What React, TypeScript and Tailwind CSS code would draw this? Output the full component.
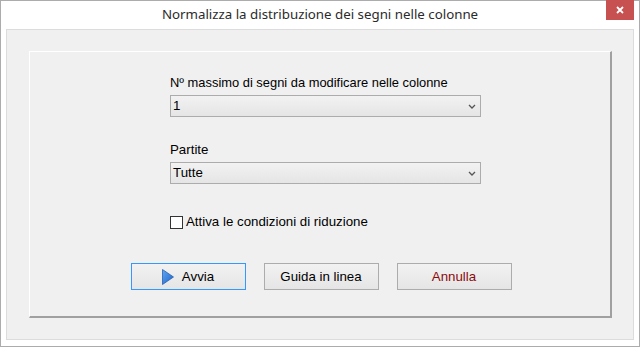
import React from 'react';

const font = { fontFamily: '"Liberation Sans", Arial, sans-serif' };

const Chevron = () => (
  <svg width="8" height="5" viewBox="0 0 8 5" className="mr-[4px]">
    <path d="M1 1 L4 4 L7 1" fill="none" stroke="#555" strokeWidth="1.3" />
  </svg>
);

const Select: React.FC<{ value: string }> = ({ value }) => (
  <div className="flex h-[22px] w-[311px] items-center justify-between border border-[#acacac] bg-gradient-to-b from-[#f2f2f2] to-[#e5e5e5] pl-[2px] text-[13.3px] text-black">
    <span>{value}</span>
    <Chevron />
  </div>
);

const PlayIcon = () => (
  <svg width="12" height="16" viewBox="0 0 12 16" className="mr-[8px]">
    <defs>
      <linearGradient id="pg" x1="0" y1="0" x2="1" y2="1">
        <stop offset="0" stopColor="#5ea8f2" />
        <stop offset="1" stopColor="#1c62c9" />
      </linearGradient>
    </defs>
    <polygon points="0.5,0.5 11.5,8 0.5,15.5" fill="url(#pg)" stroke="#2a5fb0" strokeWidth="0.8" />
  </svg>
);

export default function App() {
  return (
    <div
      className="flex h-[347px] w-[640px] flex-col border border-[#acacac] bg-white"
      style={font}
    >
      {/* title bar */}
      <div className="relative flex h-[28px] shrink-0 items-center justify-center">
        <span
          className="text-[13.3px] text-[#2b2b2b]"
          style={{ fontFamily: '"Noto Sans", "Open Sans", sans-serif' }}
        >
          Normalizza la distribuzione dei segni nelle colonne
        </span>
        <div className="absolute right-[5px] top-[-1px] flex h-[20px] w-[28px] items-center justify-center bg-[#c75050]">
          <svg width="8" height="8" viewBox="0 0 8 8">
            <path d="M1 1 L7 7 M7 1 L1 7" stroke="white" strokeWidth="1.8" />
          </svg>
        </div>
      </div>

      {/* client area */}
      <div className="mx-[5px] mb-[6px] flex flex-1 flex-col border border-[#dcdcdc] bg-[#f0f0f0] pb-[21px] pl-[22px] pr-[21px] pt-[21px]">
        <div className="flex flex-1 flex-col border-b-2 border-l border-r-2 border-t border-b-[#a0a0a0] border-l-white border-r-[#a0a0a0] border-t-white pt-[23px]">
          <div className="flex flex-col pl-[140px] text-[13.3px] text-black">
            <div className="text-[12.9px] leading-[16px]">Nº massimo di segni da modificare nelle colonne</div>
            <div className="mt-[4px]">
              <Select value="1" />
            </div>
            <div className="mt-[25px] leading-[16px]">Partite</div>
            <div className="mt-[4px]">
              <Select value="Tutte" />
            </div>
            <div className="mt-[30px] flex h-[16px] items-center">
              <div className="h-[13px] w-[13px] border border-[#333] bg-white" />
              <span className="ml-[3px]">Attiva le condizioni di riduzione</span>
            </div>
          </div>

          <div className="mt-[33px] flex justify-center gap-[18px] pl-[2px] text-[13.3px]">
            <button className="flex h-[27px] w-[115px] items-center justify-center border border-[#3399ff] bg-gradient-to-b from-[#f2f2f2] to-[#e5e5e5] text-black">
              <PlayIcon />
              Avvia
            </button>
            <button className="flex h-[27px] w-[115px] items-center justify-center border border-[#acacac] bg-gradient-to-b from-[#f2f2f2] to-[#e5e5e5] text-black">
              Guida in linea
            </button>
            <button className="flex h-[27px] w-[115px] items-center justify-center border border-[#acacac] bg-gradient-to-b from-[#f2f2f2] to-[#e5e5e5] text-[#8b0a0a]">
              Annulla
            </button>
          </div>
        </div>
      </div>
    </div>
  );
}
